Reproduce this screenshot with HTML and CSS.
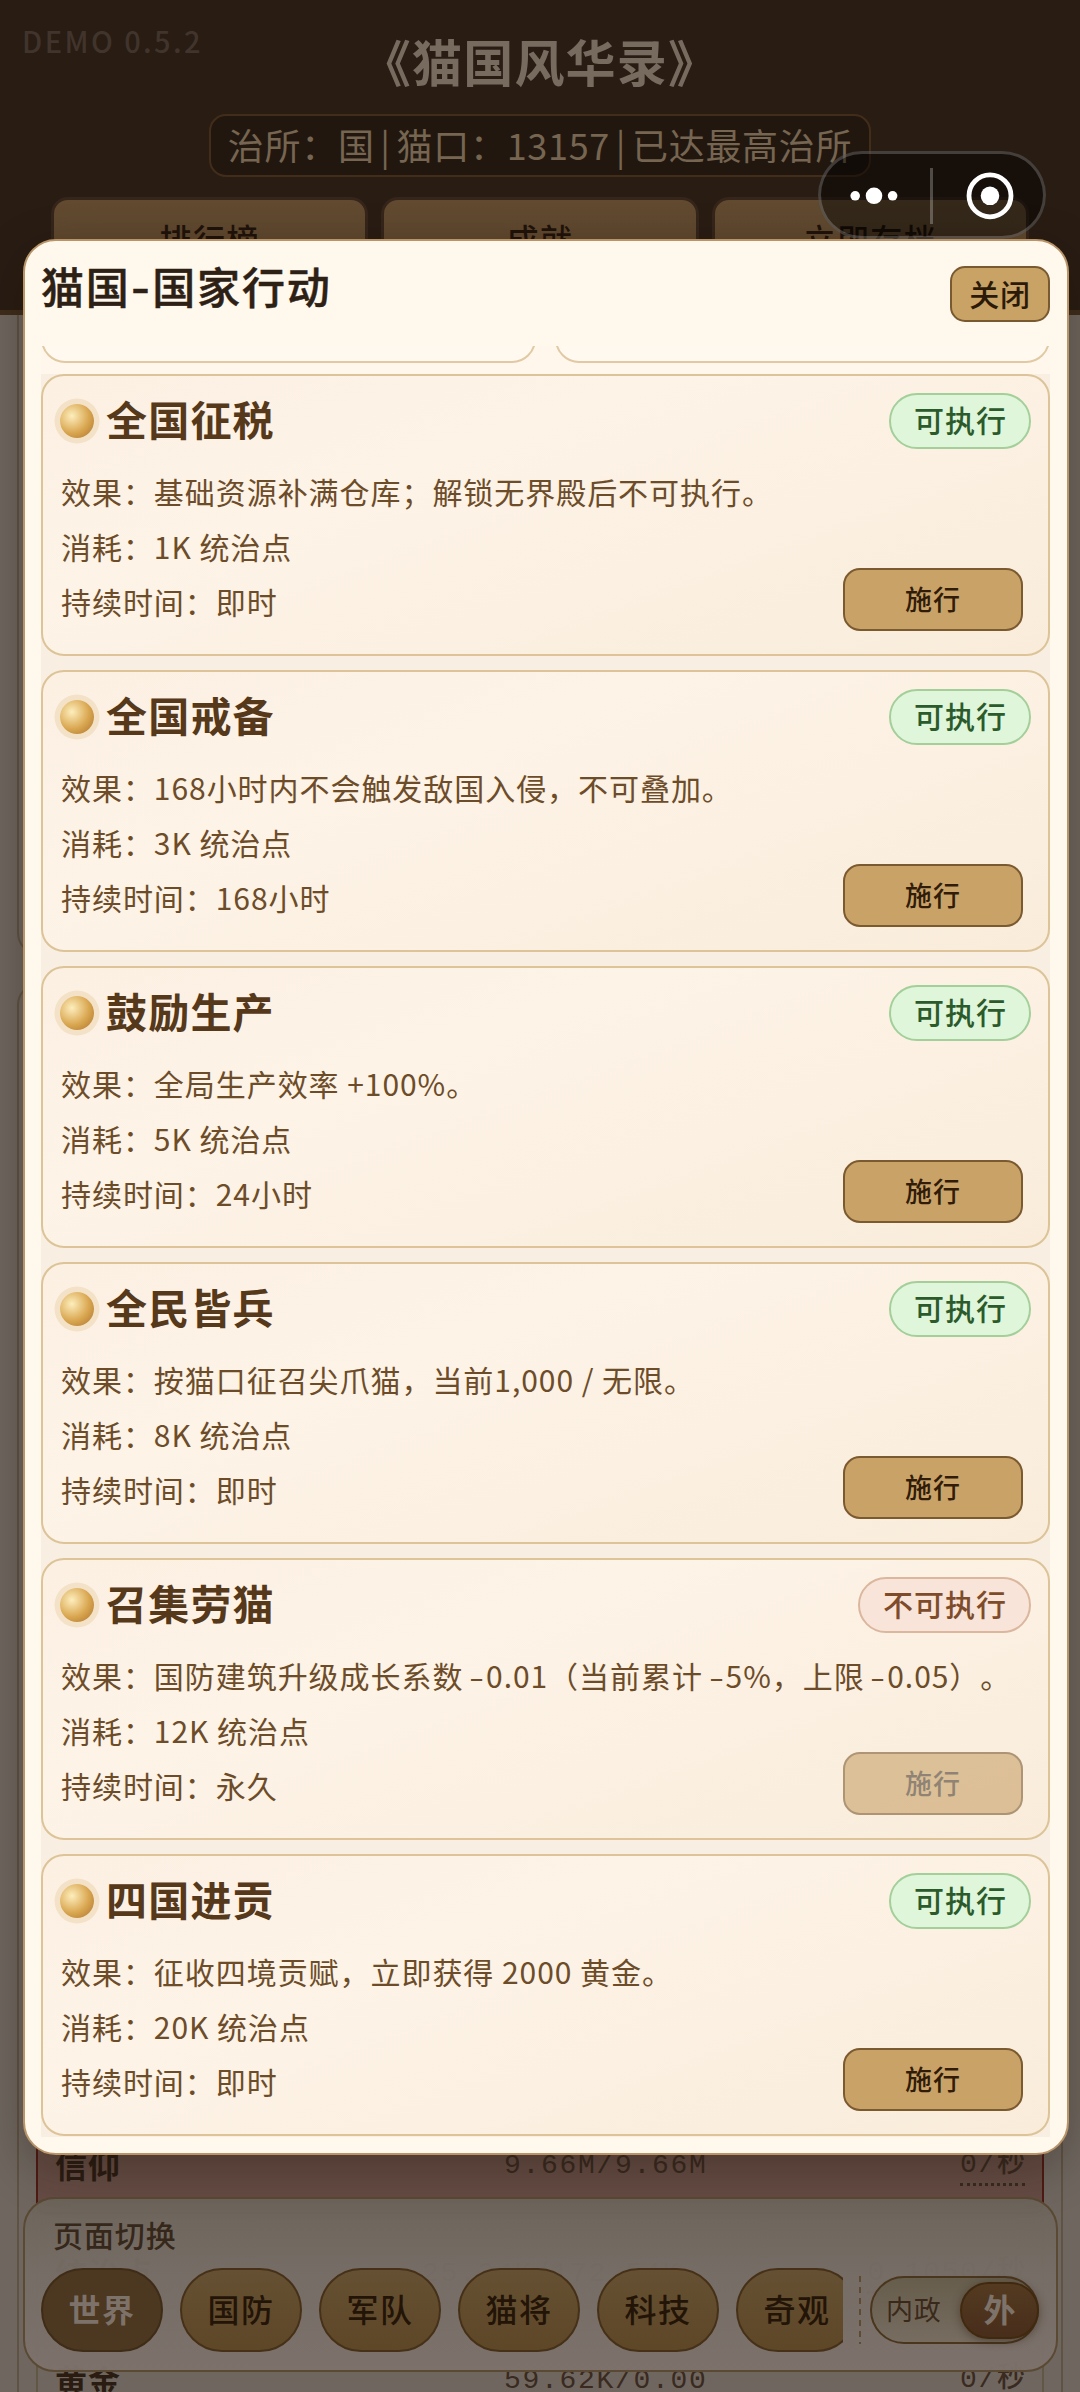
FILE: index.html
```
<!DOCTYPE html>
<html lang="zh-CN">
<head>
<meta charset="utf-8">
<title>猫国风华录</title>
<link rel="stylesheet" href="styles.css">
</head>
<body>
<div class="page">
  <header class="top">
    <span class="version">DEMO 0.5.2</span>
    <h1 class="game-title">《猫国风华录》</h1>
    <div class="status">治所：国 | 猫口：13157 | 已达最高治所</div>
    <div class="top-buttons"><span>排行榜</span><span>成就</span><span>立即存档</span></div>
  </header>
  <main class="content">
    <section class="panel panel-first"></section>
    <section class="panel panel-rest">
      <div class="res res-full"><b>信仰</b><span class="amount">9.66M/9.66M</span><span class="rate">0/<i>秒</i></span></div>
      <div class="res"><b>统治点</b><span class="amount amount-wide">25.24K/172.54K</span><span class="rate">0.1050/<i>秒</i></span></div>
      <div class="res"><b>黄金</b><span class="amount">59.62K/0.00</span><span class="rate">0/<i>秒</i></span></div>
    </section>
  </main>

  <nav class="nav">
    <div class="nav-label">页面切换</div>
    <div class="nav-row">
      <div class="tabs"><span class="tab active">世界</span><span class="tab">国防</span><span class="tab">军队</span><span class="tab">猫将</span><span class="tab">科技</span><span class="tab">奇观</span></div>
      <div class="nav-divider"></div>
      <div class="toggle"><span class="toggle-off">内政</span><span class="toggle-on">外</span></div>
    </div>
  </nav>

  <div class="modal">
    <div class="modal-head"><h2>猫国-国家行动</h2><button class="close">关闭</button></div>
    <div class="modal-body">
      <div class="cut-row"><div></div><div></div></div>
      <article class="card">
        <div class="card-head"><i class="orb"></i><h3>全国征税</h3><span class="badge ok">可执行</span></div>
        <div class="card-body"><div class="lines"><p>效果：基础资源补满仓库；解锁无界殿后不可执行。</p><p>消耗：1K 统治点</p><p>持续时间：即时</p></div><button class="act">施行</button></div>
      </article>
      <article class="card">
        <div class="card-head"><i class="orb"></i><h3>全国戒备</h3><span class="badge ok">可执行</span></div>
        <div class="card-body"><div class="lines"><p>效果：168小时内不会触发敌国入侵，不可叠加。</p><p>消耗：3K 统治点</p><p>持续时间：168小时</p></div><button class="act">施行</button></div>
      </article>
      <article class="card">
        <div class="card-head"><i class="orb"></i><h3>鼓励生产</h3><span class="badge ok">可执行</span></div>
        <div class="card-body"><div class="lines"><p>效果：全局生产效率 +100%。</p><p>消耗：5K 统治点</p><p>持续时间：24小时</p></div><button class="act">施行</button></div>
      </article>
      <article class="card">
        <div class="card-head"><i class="orb"></i><h3>全民皆兵</h3><span class="badge ok">可执行</span></div>
        <div class="card-body"><div class="lines"><p>效果：按猫口征召尖爪猫，当前1,000 / 无限。</p><p>消耗：8K 统治点</p><p>持续时间：即时</p></div><button class="act">施行</button></div>
      </article>
      <article class="card">
        <div class="card-head"><i class="orb"></i><h3>召集劳猫</h3><span class="badge no">不可执行</span></div>
        <div class="card-body"><div class="lines"><p>效果：国防建筑升级成长系数 <span class="dash">-</span>0.01（当前累计 <span class="dash">-</span>5%，上限 <span class="dash">-</span>0.05）。</p><p>消耗：12K 统治点</p><p>持续时间：永久</p></div><button class="act" disabled>施行</button></div>
      </article>
      <article class="card">
        <div class="card-head"><i class="orb"></i><h3>四国进贡</h3><span class="badge ok">可执行</span></div>
        <div class="card-body"><div class="lines"><p>效果：征收四境贡赋，立即获得 2000 黄金。</p><p>消耗：20K 统治点</p><p>持续时间：即时</p></div><button class="act">施行</button></div>
      </article>
    </div>
  </div>

  <div class="capsule">
    <svg width="228" height="88" viewBox="0 0 228 88">
      <g fill="#fff"><circle cx="37.2" cy="44.8" r="4.8"/><circle cx="56" cy="44.8" r="8.3"/><circle cx="74.6" cy="44.8" r="4.8"/><circle cx="172" cy="44.8" r="9.3"/></g>
      <rect x="112" y="17" width="3" height="56" fill="#fff" fill-opacity=".25"/>
      <circle cx="172" cy="44.8" r="21" fill="none" stroke="#fff" stroke-width="4.8"/>
    </svg>
  </div>
</div>
</body>
</html>
```
FILE: styles.css
```
* { box-sizing: border-box; margin: 0; padding: 0; }
body { width: 1080px; height: 2392px; overflow: hidden; font-family: "Noto Sans CJK SC", sans-serif; text-spacing-trim: space-all; }
button { font-family: inherit; }
i { font-style: normal; }
.page { position: relative; width: 1080px; height: 2392px; overflow: hidden; background: #6f675f; display: flex; flex-direction: column; }

.top { position: relative; height: 315px; flex: none; background: #291c13; border-bottom: 5px solid #402d1b; display: flex; flex-direction: column; align-items: center; }
.version { position: absolute; left: 22px; top: 19px; font-size: 29px; line-height: 42px; letter-spacing: 2.4px; font-weight: 500; color: #40342c; }
.game-title { margin-top: 24px; height: 72px; line-height: 72px; font-size: 50px; letter-spacing: 1.2px; font-weight: 700; color: #776b60; white-space: nowrap; }
.status { margin-top: 18px; width: 662px; height: 63px; border: 2px solid #422d1b; border-radius: 17px; background: #21170f; color: #766551; font-size: 36px; line-height: 56px; letter-spacing: .7px; word-spacing: -3px; text-align: center; white-space: nowrap; }
.top-buttons { margin-top: 20px; width: 978px; height: 84px; display: grid; grid-template-columns: repeat(3, 1fr); gap: 13px; }
.top-buttons span { border: 3px solid #35251a; border-radius: 17px; background: linear-gradient(#614a30, #5c452c); color: #1f130a; font-size: 32px; letter-spacing: 1.4px; font-weight: 500; line-height: 77px; text-align: center; }

.content { padding: 0 17px; flex: 1; }
.panel { border: 2px solid #5f5343; }
.panel-first { height: 640px; border-top: 0; border-radius: 0 0 22px 22px; }
.panel-rest { margin-top: 28px; height: 1450px; border-radius: 22px; padding: 1129px 17px 0; display: flex; flex-direction: column; gap: 7.5px; }
.res { flex: none; height: 100px; border: 2px solid #625645; border-radius: 10px; padding: 0 17px; display: flex; justify-content: space-between; align-items: center; color: #2b1c12; }
.res-full { background: #654c44; border-color: #4f1a14; }
.res b { width: 146px; font-size: 32px; letter-spacing: 1px; font-weight: 700; white-space: nowrap; }
.amount { flex: 1; padding: 3px 0 0 303px; font-family: "Liberation Mono", monospace; font-size: 28px; letter-spacing: 1.7px; color: #3a2a20; white-space: nowrap; }
.amount-wide { padding-left: 221px; }
.rate { font-family: "Liberation Mono", monospace; font-size: 28px; letter-spacing: 1.7px; line-height: 36px; color: #3a2a20; border-bottom: 3px dotted #3a2a20; white-space: nowrap; }
.rate i { font-family: "Noto Sans CJK SC", sans-serif; font-weight: 500; letter-spacing: 0; }

.nav { position: absolute; left: 23px; top: 2197px; width: 1035px; height: 175px; border: 2px solid #5a4933; border-radius: 32px; background: linear-gradient(rgba(109,101,91,.97), rgba(118,109,102,.97) 45%, rgba(124,114,107,.97)); padding: 13px 16px 0; }
.nav-label { margin-left: 12px; height: 45px; line-height: 45px; font-size: 30px; letter-spacing: .9px; font-weight: 500; color: #35271a; }
.nav-row { margin-top: 11px; height: 84px; display: flex; align-items: center; }
.tabs { width: 802px; height: 84px; display: flex; gap: 17px; overflow: hidden; }
.tab { flex: none; width: 122px; height: 84px; border: 2px solid #463118; border-radius: 42px; background: linear-gradient(#665033, #5d4727); color: #231408; font-size: 32px; letter-spacing: 1.6px; font-weight: 500; line-height: 77px; text-align: center; }
.tab.active { background: #4c3720; color: #7d7269; border-color: #3f2c17; font-weight: 700; }
.nav-divider { margin-left: 16px; width: 2px; height: 68px; background: repeating-linear-gradient(#5f4b32 0 6px, transparent 6px 11px); }
.toggle { margin-left: 9px; width: 169px; height: 68px; border: 2px solid #4a351d; border-radius: 34px; background: linear-gradient(#675d4c, #766c60); display: flex; align-items: center; justify-content: space-between; }
.toggle-off { margin-left: 14px; font-size: 27px; letter-spacing: .8px; line-height: 40px; padding-bottom: 2px; color: #3a2919; white-space: nowrap; }
.toggle-on { margin-right: -2px; width: 79px; height: 57px; border: 2px solid #40290f; border-radius: 29px; background: linear-gradient(#533a20, #482e1b); box-shadow: 0 2px 10px rgba(40,25,10,.45); color: #7e736a; font-size: 32px; font-weight: 700; line-height: 49px; text-align: center; }

.modal { position: absolute; left: 23px; top: 239px; width: 1046px; height: 1916px; border: 2px solid #b89468; border-radius: 33px; background: #fff8ed; padding: 25px 17px 0 16px; box-shadow: 0 14px 48px rgba(20,12,4,.3); }
.modal-head { height: 80px; display: flex; justify-content: space-between; align-items: flex-start; }
.modal-head h2 { font-family: Inter, "Noto Sans CJK SC", sans-serif; font-size: 43px; font-weight: 500; letter-spacing: 1.8px; line-height: 44px; color: #2d2115; -webkit-text-stroke: .5px #2d2115; }
.close { width: 100px; height: 56px; border: 2px solid #79592f; border-radius: 15px; background: #c9a266; color: #2c1a09; font-size: 30px; letter-spacing: .8px; font-weight: 500; line-height: 48px; padding-bottom: 3px; }
.modal-body { height: 1791px; overflow: hidden; display: flex; flex-direction: column; gap: 14px; background: #f8eee2; }
.cut-row { height: 28px; margin-bottom: -14px; flex: none; display: grid; grid-template: 17px / 1fr 1fr; gap: 19px; align-items: end; background: #fff7ec; }
.cut-row div { height: 60px; border: 2px solid #e0c9a3; border-radius: 24px; background: #fff9f0; }

.card { flex: none; height: 282px; border: 2px solid #dcc498; border-radius: 23px; background: linear-gradient(160deg, #fbf0e2, #fdf3e7 35%, #fbf0e1 65%, #f9ecdb); padding: 17px 17px 0; }
.card-head { height: 56px; display: flex; align-items: center; }
.orb { width: 34px; height: 34px; border-radius: 50%; background: radial-gradient(circle at 35% 35%, #fdeebc 0, #d9a650 55%, #a9722b 100%); box-shadow: 0 0 0 5.5px #f3e2c7; }
.card-head h3 { flex: 1; margin: -6px 0 0 12px; font-size: 41px; letter-spacing: 1.2px; font-weight: 700; line-height: 56px; color: #56381a; }
.badge { height: 56px; border: 2px solid #a4cf9b; border-radius: 28px; padding: 0 22px 0 23px; font-size: 30px; letter-spacing: 1px; font-weight: 500; line-height: 48px; white-space: nowrap; }
.ok { background: #dff6db; color: #2b5a2b; }
.no { background: #f8e4d8; border-color: #dbb79f; color: #7e4c2a; }
.card-body { display: flex; align-items: flex-start; justify-content: space-between; }
.lines { margin: 15px 0 0 1px; width: 0; white-space: nowrap; }
.lines p { height: 55px; line-height: 55px; font-size: 30px; letter-spacing: .95px; color: #6d4c29; }
.dash { display: inline-block; width: 15px; transform: scaleX(1.45); transform-origin: 30% 50%; }
.act { margin: 119px 8px 0 0; width: 180px; height: 63px; border: 2px solid #7c5a30; border-radius: 17px; background: #c9a268; color: #301c08; font-size: 27px; letter-spacing: .9px; font-weight: 500; line-height: 55px; padding-bottom: 2px; }
.act:disabled { opacity: .6; color: #4a3d30; }

.capsule { position: absolute; left: 818px; top: 151px; width: 228px; height: 88px; border-radius: 44px; background: rgba(0,0,0,.45); box-shadow: inset 0 0 0 3px rgba(255,255,255,.2); }
.capsule svg { display: block; }
```
